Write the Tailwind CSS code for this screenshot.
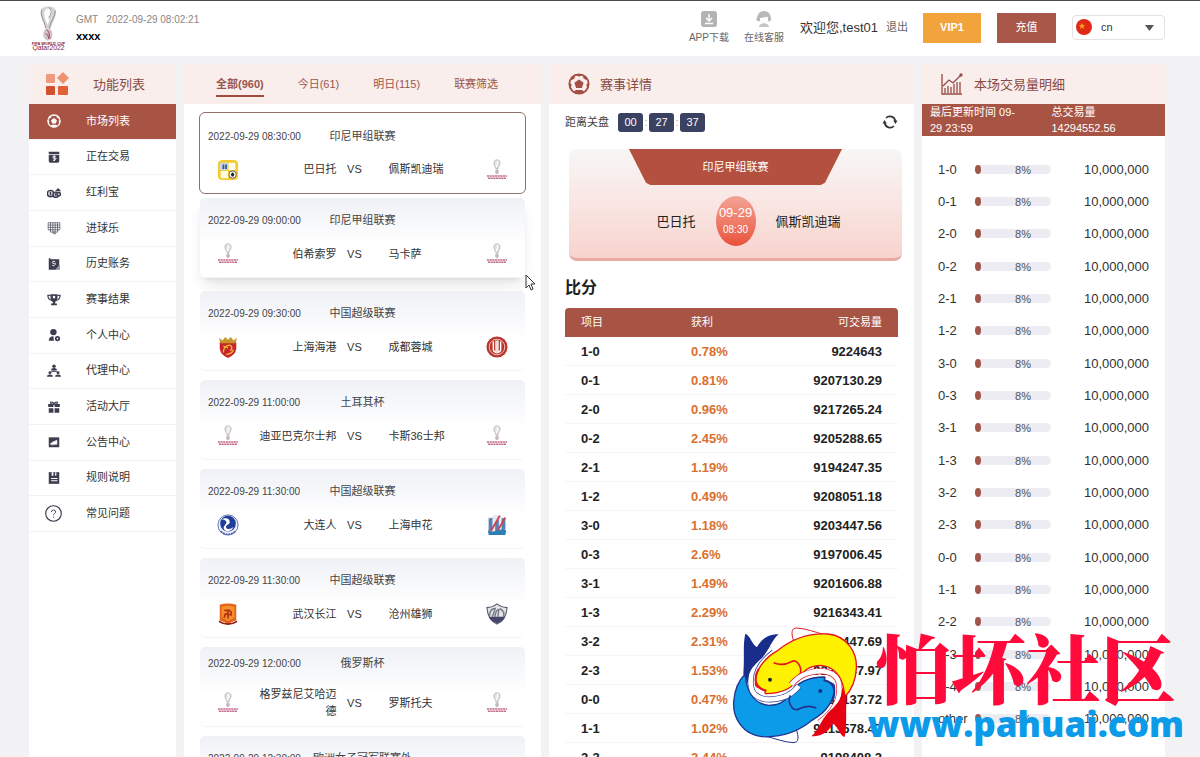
<!DOCTYPE html>
<html lang="zh-CN">
<head>
    <meta charset="UTF-8">
    <meta name="viewport" content="width=device-width, initial-scale=1.0">
    <title>市场列表</title>
    <script src="https://cdn.jsdelivr.net/npm/@tailwindcss/browser@4"></script>
</head>
<body class="relative flex flex-col h-screen overflow-hidden bg-[#f2f2f5] text-[#333] text-[11px] leading-[17px] font-['Liberation_Sans','Noto_Sans_CJK_SC',sans-serif]">

    <!-- shared symbols -->
    <svg class="hidden">
        <symbol id="worldcup" viewBox="0 0 40 46">
            <path d="M13 12C11 3 14 1 20 1s9 3 7 10c-1 5-4 8-5 13h-5c0-5-3-7-4-12z" fill="#d4d2d5"/>
            <path d="M16 11c-1-6 1-8 4-8 4 0 5 4 2 8-2 3-1 6-3 9-1-4-3-5-3-9z" fill="#fff"/>
            <path d="M13 4c-2 7 3 11 4 19M27 5c0 8-5 10-6 18M20 2c5 3 2 8 0 11" fill="none" stroke="#8f8d92" stroke-width="1"/>
            <path d="M17 24c-4 4-3 10 2 12 6-1 6-9 3-12z" fill="#cfc5cb"/>
            <path d="M18 25c4 2 2 6 4 9M17 29c2 0 3 2 3 5" fill="none" stroke="#a2375c" stroke-width="1"/>
            <text x="20" y="40" text-anchor="middle" font-size="4" font-weight="700" fill="#8a1538">FIFA WORLD CUP</text>
            <text x="20" y="46" text-anchor="middle" font-size="7" fill="#8a1538">Qatar2022</text>
        </symbol>
        <symbol id="cup-small" viewBox="0 0 24 24">
            <path d="M9 6c-1-4 1-5 3-5s4 1 3 5c-1 2-2 3-2 5h-2c0-2-2-3-2-5z" fill="#e4e2e4" stroke="#a9a6aa" stroke-width=".8"/>
            <path d="M12 2c2 2 0 4-1 7" stroke="#fff" stroke-width="1.2" fill="none"/>
            <ellipse cx="12" cy="14" rx="2" ry="2.6" fill="#c7b6bf"/>
            <path d="M1 18.500h22M2 21h20" stroke="#c56c8e" stroke-width="1.800" stroke-dasharray="2.400 .5"/>
        </symbol>
        <symbol id="barito" viewBox="0 0 24 24">
            <path d="M6 1h12q5 0 5 5v12q0 5-5 5H6q-5 0-5-5V6q0-5 5-5z" fill="#f4cb2e"/>
            <path d="M5 4h7v8H3V6q0-2 2-2z" fill="#c8d4ea"/><path d="M12.500 4H20v8h-7.500zM4 13h8v8H6q-2 0-2-2z" fill="#fffbe6"/>
            <path d="M6 6h2v5H6zM9 6h2v5H9z" fill="#3a5690"/>
            <circle cx="17" cy="17" r="4" fill="#fff" stroke="#555" stroke-width="1"/><path d="M17 14.500l2 2-1 2.500h-2l-1-2.500z" fill="#222"/>
        </symbol>
        <symbol id="port" viewBox="0 0 24 24">
            <path d="M3 7q9-4 18 0v7q-1 7-9 10-8-3-9-10z" fill="#c6252b"/>
            <path d="M2 2l4 3 3-4 3 3 3-3 3 4 4-3-2 6H4z" fill="#c8952b"/>
            <path d="M7 18c0-5 2-7 6-8 4 0 4 5 1 6M10 20c4 0 7-2 8-5M7 11l5 2" fill="none" stroke="#f2b13a" stroke-width="1.500"/>
        </symbol>
        <symbol id="chengdu" viewBox="0 0 24 24">
            <circle cx="12" cy="12" r="11.500" fill="#b8352c"/><circle cx="12" cy="12" r="8.500" fill="none" stroke="#f3c9c2" stroke-width="1"/>
            <path d="M8 6v9q0 2 3 3V5M13 5v13q3-1 3-3V6" fill="none" stroke="#fff" stroke-width="1.600"/>
        </symbol>
        <symbol id="dalian" viewBox="0 0 24 24">
            <circle cx="12" cy="12" r="11" fill="#eef1fa" stroke="#5969ae" stroke-width="1"/>
            <circle cx="12" cy="10.500" r="8.500" fill="#1f3d99"/>
            <path d="M5 6c5-3 9-1 9 3-1 3-5 3-4 6 1 2 5 2 8-1-1 4-6 6-9 4-4-3 0-6 1-8s-1-4-5-4z" fill="#fff"/>
            <path d="M4 19q8 6 16 0" fill="none" stroke="#3b4fa3" stroke-width="1.500" stroke-dasharray="2 1"/>
        </symbol>
        <symbol id="shenhua" viewBox="0 0 24 24">
            <path d="M2 3l4 1 3-3h7l2 3 4-1v14l-1 5H3l-1-4z" fill="#e7eaf3"/>
            <path d="M3 5l4-1v13l-4 2zM10 10l4-4v12l-4 2zM17 5l4-1v13l-4 2z" fill="#5580b5"/>
            <path d="M5 19L15 2M12 19l9-15" stroke="#d04353" stroke-width="2"/><path d="M2 18q5 2 10 0t10 0l-1 5H3z" fill="#2a7fb5"/>
        </symbol>
        <symbol id="wuhan" viewBox="0 0 24 24">
            <path d="M3 2q9-3 18 0v17q-5 1-9 5-4-4-9-5z" fill="#e3631c"/>
            <path d="M5 4q7-2 14 0v12q-4 1-7 4-3-3-7-4z" fill="#f4902b"/>
            <path d="M8 8h5q4 2 2 6M8 16c0-5 3-5 6-3M12 8v9" fill="none" stroke="#b42b12" stroke-width="1.800"/><path d="M2 19q10 6 20 0v2q-5 3-10 3T2 21z" fill="#8f1d16"/>
        </symbol>
        <symbol id="cangzhou" viewBox="0 0 24 24">
            <path d="M1 5q6 0 11-4 5 4 11 4-1 14-11 18Q2 19 1 5z" fill="#e3e5e9" stroke="#555a69" stroke-width="1.200"/>
            <path d="M4 14c0-6 3-8 6-8L7 15M10 15c0-5 2-8 4-8l-1 8M15 6q6 3 4 9" fill="none" stroke="#777c88" stroke-width="1.600"/><path d="M3 15h18q-2 5-9 7-7-2-9-7z" fill="#46436f"/>
        </symbol>
        <symbol id="ball" viewBox="0 0 24 24">
            <circle cx="12" cy="12" r="10.500" fill="none" stroke="currentColor" stroke-width="2"/>
            <path d="M12 7l5 3.600-1.900 5.800H8.900L7 10.600zM7.500 1.500L12 4l4.500-2.500zM1 10l3 2.500L3 17H2zM23 10l-3 2.500 1 4.500h1zM6 21l2.500-2.500h7L18 21l-6 2zM3 5l4-3 .5 3.500L4 8zM21 5l-4-3-.5 3.500L20 8z" fill="currentColor"/>
        </symbol>
    </svg>

    <header class="flex items-center shrink-0 h-14 pl-[29px] pr-[35px] pb-0.5 bg-white border-t border-[#4a4a4a]">
        <svg class="w-[39px] h-[46px]" aria-label="FIFA World Cup Qatar 2022"><use href="#worldcup"/></svg>
        <div class="ml-2 leading-4">
            <p class="text-[10px] text-[#888]">GMT &nbsp; 2022-09-29 08:02:21</p>
            <p class="font-bold text-black">xxxx</p>
        </div>
        <nav class="flex items-center ml-auto gap-[15px] text-[10px] leading-[14px] text-[#666]">
            <a href="#" class="flex flex-col items-center gap-1">
                <svg class="size-4" viewBox="0 0 16 16"><rect width="16" height="16" rx="3" fill="#b3b3b3"/><path d="M8 3v6M5 7l3 3 3-3M4 12.500h8" stroke="#fff" stroke-width="1.400" fill="none"/></svg>
                APP下载
            </a>
            <a href="#" class="flex flex-col items-center gap-1">
                <svg class="size-4" viewBox="0 0 16 16"><path d="M1 7Q2 0 8 0t7 7v2q-1 2-3 1L12 6 4 7v3Q1 11 0 8z" fill="#b9b9b9"/><path d="M4 8q4 0 6-2.500 0 2 2 2.500-.5 4-4 4T4 8z" fill="#fff"/><path d="M3 16q0-3 5-4 5 1 5 4z" fill="#c6c6c6"/></svg>
                在线客服
            </a>
        </nav>
        <p class="ml-4 text-[13px]">欢迎您,test01</p>
        <a href="#" class="ml-2 text-[#666]">退出</a>
        <button type="button" class="ml-[15px] w-[58px] h-[30px] bg-[#f3a33b] text-white font-bold">VIP1</button>
        <button type="button" class="ml-4 w-[59px] h-[30px] bg-[#a85748] text-white">充值</button>
        <div class="relative ml-4">
            <select aria-label="语言" class="appearance-none block w-[93px] h-[25px] pl-7 bg-white border border-[#e2e2e2] rounded-sm text-[11px]">
                <option>cn</option>
                <option>en</option>
            </select>
            <svg class="absolute left-1 top-1 size-4 pointer-events-none" viewBox="0 0 16 16"><circle cx="8" cy="8" r="8" fill="#e02a17"/><path d="M6 4l1 2h2L7.500 7.500 8 10 6 8.500 4 10l.5-2.500L3 6h2z" fill="#f7a11c"/></svg>
            <svg class="absolute right-[11px] top-[10px] w-[9px] h-1.5 pointer-events-none" viewBox="0 0 9 6"><path d="M0 0h9L4.500 6z" fill="#555"/></svg>
        </div>
    </header>

    <main class="grid grid-cols-[147fr_357fr_365fr_243fr] gap-x-2 flex-1 min-h-0 pt-2 pl-[29px] pr-[35px]">

        <section class="bg-white overflow-hidden">
            <h2 class="flex items-center h-10 pl-4 gap-6 bg-[#f9eeec] text-[13px] text-[#8a4a43]">
                <svg class="size-6" viewBox="0 0 24 24"><rect x="1" y="2" width="9" height="9" rx="1" fill="#ee9a7d"/><path d="M18 0l6 6-6 6-6-6z" fill="#ee9270"/><rect x="1" y="14" width="9" height="9" rx="1" fill="#d3512f"/><rect x="13" y="14" width="10" height="9" rx="1" fill="#e0603a"/></svg>
                功能列表
            </h2>
            <ul id="menu" class="grid auto-rows-fr h-[428px]"></ul>
        </section>

        <section class="bg-white overflow-hidden">
            <nav class="flex items-center h-10 pl-8 gap-[34px] bg-[#f9eeec] text-[#98564d]">
                <a href="#" class="pt-1 pb-0.5 font-bold border-b-2 border-[#a34b3e]">全部(960)</a>
                <a href="#">今日(61)</a>
                <a href="#">明日(115)</a>
                <a href="#">联赛筛选</a>
            </nav>
            <div id="matches" class="flex flex-col gap-[9px] px-4 pt-[9px]"></div>
        </section>

        <section class="bg-white overflow-hidden">
            <h2 class="flex items-center h-10 pl-[19px] gap-[10px] bg-[#f9eeec] text-[13px] text-[#8a4a43]">
                <svg class="size-[22px] text-[#a34f45]"><use href="#ball"/></svg>
                赛事详情
            </h2>
            <div class="px-4">
                <div class="flex items-center h-9 text-[#444]">
                    距离关盘
                    <div class="flex items-center ml-[9px] *:odd:w-[25px] *:odd:h-[19px] *:odd:rounded-[3px] *:odd:bg-[#3b4160] *:odd:text-white *:odd:text-center *:odd:leading-[19px] *:even:w-1.5 *:even:text-center *:even:text-[#aaa]">
                        <span>00</span><span>:</span><span>27</span><span>:</span><span>37</span>
                    </div>
                    <button type="button" aria-label="刷新" class="ml-auto">
                        <svg class="size-4" viewBox="0 0 16 16" fill="none" stroke="#333" stroke-width="1.700"><path d="M4 4A5.500 5.500 0 0113.300 7M12 12A5.500 5.500 0 012.700 9"/><path d="M15.500 6.500h-4.300L13.500 10zM.5 9.500h4.300L2.500 6z" fill="#333" stroke="none"/></svg>
                    </button>
                </div>
                <div class="ml-1 -mr-1 mt-[9px] pb-3 rounded-lg bg-linear-to-b from-[#f7f6f6] via-[#f9e6e3] to-[#f8d3ce] border-b-3 border-[#e6aaa2]">
                    <p class="w-[64%] h-9 mx-auto bg-[#b4503f] text-white text-center leading-9 [clip-path:polygon(0_0,100%_0,92%_94%,90%_100%,10%_100%,8%_94%)]">印尼甲组联赛</p>
                    <div class="grid grid-cols-[1fr_40px_1fr] items-center gap-5 mt-[11px] text-[13px] text-[#222]">
                        <span class="text-right">巴日托</span>
                        <p class="flex flex-col items-center justify-center h-[50px] rounded-[50%] bg-linear-to-b from-[#f2a396] to-[#e8503a] text-white">09-29<span class="text-[10px]">08:30</span></p>
                        <span>佩斯凯迪瑞</span>
                    </div>
                </div>
                <h3 class="mt-4 mb-[9px] text-base leading-[22px] font-bold text-[#222]">比分</h3>
                <table class="w-full table-fixed border-separate border-spacing-0">
                    <thead>
                        <tr class="h-[29px] text-white text-left *:bg-[#a85445] *:font-normal *:first:rounded-tl-sm *:last:rounded-tr-sm">
                            <th class="pl-4">项目</th>
                            <th class="pl-[15px]">获利</th>
                            <th class="pr-4 text-right">可交易量</th>
                        </tr>
                    </thead>
                    <tbody id="scores" class="text-[13px] font-bold text-[#222]"></tbody>
                </table>
            </div>
        </section>

        <section class="bg-white overflow-hidden">
            <h2 class="flex items-center h-10 pl-[19px] gap-[11px] bg-[#f9eeec] text-[13px] text-[#8a4a43]">
                <svg class="size-[22px]" viewBox="0 0 22 22" fill="none" stroke="#954a44" stroke-width="1.300"><path d="M1 1v20h20M4 20v-5M7 20v-7M10 20v-6M13 20v-9M16 20v-11M19 20V9M2 13l6-6 4 3 8-8"/><circle cx="20" cy="2" r="1"/></svg>
                本场交易量明细
            </h2>
            <div class="grid grid-cols-2 pl-2 bg-[#a85445] text-white leading-4">
                <p class="w-24">最后更新时间 09-<wbr>29 23:59</p>
                <p class="pl-1">总交易量<br>14294552.56</p>
            </div>
            <ul id="volumes" class="grid auto-rows-fr h-[582px] mt-[17px] px-4 text-[13px]"></ul>
        </section>
    </main>

    <!-- watermark -->
    <div class="absolute right-4 bottom-[7px] flex items-center pointer-events-none">
        <svg class="w-[140px] h-[128px]" viewBox="0 0 420 384">
            <defs>
                <path id="fin" d="M197 58C190 35 188 18 207 18C235 20 260 30 290 38z"/>
                <path id="tail" d="M342 195C345 235 318 255 300 272C275 300 272 325 250 343C275 343 298 335 315 305C330 312 335 340 350 345C358 310 352 280 356 225z"/>
                <path id="body" d="M83 190C78 150 105 110 150 85C195 48 250 33 300 36C360 42 388 95 385 140C383 175 370 205 350 225C348 180 330 135 280 130C240 130 225 150 215 165C195 200 160 215 112 215C108 210 116 208 112 204C100 200 88 198 83 190z"/>
                <path id="gill" d="M137 122C155 130 175 127 190 119C208 108 225 140 215 160"/>
                <path id="band" d="M128 78C85 110 62 150 69 195C76 232 120 240 165 226C185 219 200 208 212 192"/>
                <path id="lip" d="M92 140C75 170 82 200 115 206"/>
            </defs>
            <g transform="rotate(180 201 190)">
                <use href="#fin" fill="#fff" stroke="#22338f" stroke-width="3"/>
                <use href="#body" fill="#0b9be8" stroke="#22338f" stroke-width="4"/>
            </g>
            <use href="#fin" fill="#fff" stroke="#dd1f2d" stroke-width="3"/>
            <use href="#body" fill="#fff200" stroke="#e4151f" stroke-width="4"/>
            <g fill="none">
                <use href="#band" stroke="#22338f" stroke-width="18"/><use href="#band" stroke="#fff" stroke-width="14"/>
                <use href="#gill" stroke="#e4151f" stroke-width="5"/><use href="#lip" stroke="#e4151f" stroke-width="6"/>
                <g transform="rotate(180 201 190)">
                    <use href="#band" stroke="#dd1f2d" stroke-width="18"/><use href="#band" stroke="#fff" stroke-width="14"/>
                    <use href="#gill" stroke="#22338f" stroke-width="5"/><use href="#lip" stroke="#22338f" stroke-width="6"/>
                </g>
            </g>
            <use href="#tail" fill="#e60012"/>
            <use href="#tail" transform="rotate(180 201 190)" fill="#1b2d8a"/>
            <circle cx="126" cy="173" r="6" fill="#1b2350"/><circle cx="277" cy="207" r="6" fill="#1b2d8a"/>
        </svg>
        <div class="text-center">
            <p class="text-[75px] leading-[76px] font-black text-[#ff0a3a] font-['Noto_Serif_CJK_SC','Noto_Sans_CJK_SC',serif]">怕坏社区</p>
            <p class="text-[35px] leading-10 font-extrabold text-[#0b9be8] font-['Open_Sans','Noto_Sans',sans-serif]">www.pahuai.com</p>
        </div>
    </div>

<script>
    const menu = [
        ['市场列表', '<use href="#ball"/>'],
        ['正在交易', '<path d="M3 3h18v4H3zM3 8h18v11q0 3-3 3H6q-3 0-3-3z" fill="currentColor"/><path d="M15 11q-5-2-5 1t4 2-1 4q-2 0-3-1M12.500 9v10" stroke="#fff" stroke-width="1.500" fill="none"/>'],
        ['红利宝', '<g fill="#c9cad3" stroke="currentColor" stroke-width="2.500"><circle cx="6" cy="13" r="5.500"/><circle cx="15" cy="15" r="4.500"/><circle cx="20" cy="14" r="3"/></g><path d="M6 10v6M15 12v5M19 5l-3 3h6z" stroke="currentColor" stroke-width="2"/>'],
        ['进球乐', '<path d="M2 3h20v12l-3 1M2 3v12l3 1M6 3v16M10 3v18M14 3v18M18 3v16M2 7h20M2 11h20M4 15h16M6 19h12" fill="none" stroke="currentColor" stroke-width="1.500" opacity=".75"/><circle cx="13" cy="20" r="3" fill="#8c8d9a"/>'],
        ['历史账务', '<path d="M3 2h3v2h15v10l-6 8H3z" fill="currentColor"/><path d="M14 8q-5-2-5 1t4 2-1 4q-2 0-3-1" stroke="#fff" stroke-width="1.500" fill="none"/><path d="M14 22l8-9v9z" fill="#8c8d9a"/>'],
        ['赛事结果', '<path d="M6 2h12v7q0 5-4 6v3h3v3H7v-3h3v-3q-4-1-4-6z" fill="currentColor"/><path d="M6 4H1.500q0 7 5 8M18 4h4.500q0 7-5 8" fill="none" stroke="currentColor" stroke-width="2"/><path d="M10 5h4v4h-4z" fill="#fff"/>'],
        ['个人中心', '<circle cx="11" cy="7" r="5.500" fill="currentColor"/><path d="M3 22q0-8 8-8l1 8z" fill="currentColor"/><circle cx="18" cy="18" r="3" fill="none" stroke="currentColor" stroke-width="3"/>'],
        ['代理中心', '<g fill="currentColor"><circle cx="12" cy="4" r="3"/><path d="M7 11q0-4 5-4t5 4z"/><circle cx="5" cy="15" r="2.500"/><path d="M0 22q0-4 5-4t5 4z"/><circle cx="19" cy="15" r="2.500"/><path d="M14 22q0-4 5-4t5 4z"/></g><path d="M12 11v3M6 14l6-2 6 2" stroke="currentColor" stroke-width="1.500" fill="none"/>'],
        ['活动大厅', '<path d="M2 7h9v5H2zM13 7h9v5h-9zM3 14h8v8H3zM13 14h8v8h-8z" fill="currentColor"/><path d="M12 7Q6 8 6 4q4-2 6 3 2-5 6-3 0 4-6 3" fill="none" stroke="currentColor" stroke-width="2"/>'],
        ['公告中心', '<path d="M3 4h18v17H3z" fill="currentColor"/><path d="M6 15l4-3 7-3v7H6zM8 17h3" fill="#fff" stroke="#fff"/>'],
        ['规则说明', '<path d="M3 2h18v20H3z" fill="currentColor"/><path d="M8 2h3v6H8zM14 2h2v6h-2zM7 12h11v1.500H7zM7 16h11v1.500H7z" fill="#fff"/>'],
        ['常见问题', '<circle cx="12" cy="12" r="11" fill="none" stroke="currentColor" stroke-width="1.600"/><path d="M9 10q0-3 3-3t3 3q0 1-1.500 2T12 14.500M12 16.500v1.500" fill="none" stroke="currentColor" stroke-width="1.300"/>'],
    ];

    const matches = [
        ['2022-09-29 08:30:00', '印尼甲组联赛', '巴日托', '佩斯凯迪瑞', 'barito', 'cup-small'],
        ['2022-09-29 09:00:00', '印尼甲组联赛', '伯希索罗', '马卡萨', 'cup-small', 'cup-small'],
        ['2022-09-29 09:30:00', '中国超级联赛', '上海海港', '成都蓉城', 'port', 'chengdu'],
        ['2022-09-29 11:00:00', '土耳其杯', '迪亚巴克尔士邦', '卡斯36士邦', 'cup-small', 'cup-small'],
        ['2022-09-29 11:30:00', '中国超级联赛', '大连人', '上海申花', 'dalian', 'shenhua'],
        ['2022-09-29 11:30:00', '中国超级联赛', '武汉长江', '沧州雄狮', 'wuhan', 'cangzhou'],
        ['2022-09-29 12:00:00', '俄罗斯杯', '格罗兹尼艾哈迈德', '罗斯托夫', 'cup-small', 'cup-small'],
        ['2022-09-29 12:30:00', '欧洲女子冠军联赛外', '', '', 'cup-small', 'cup-small'],
    ];

    const scores = [
        ['1-0', '0.78%', '9224643'], ['0-1', '0.81%', '9207130.29'], ['2-0', '0.96%', '9217265.24'],
        ['0-2', '2.45%', '9205288.65'], ['2-1', '1.19%', '9194247.35'], ['1-2', '0.49%', '9208051.18'],
        ['3-0', '1.18%', '9203447.56'], ['0-3', '2.6%', '9197006.45'], ['3-1', '1.49%', '9201606.88'],
        ['1-3', '2.29%', '9216343.41'], ['3-2', '2.31%', '9220447.69'], ['2-3', '1.53%', '9222247.97'],
        ['0-0', '0.47%', '9184137.72'], ['1-1', '1.02%', '9213578.47'], ['2-2', '2.44%', '9198408.2'],
    ];

    const volumes = ['1-0', '0-1', '2-0', '0-2', '2-1', '1-2', '3-0', '0-3', '3-1', '1-3', '3-2', '2-3', '0-0', '1-1', '2-2', '3-3', '4-4', 'other']
        .map(label => ({ label, percent: 8, amount: '10,000,000' }));

    document.getElementById('menu').innerHTML = menu.map(([name, icon], i) => `
        <li class="border-b border-[#f2f2f4]">
            <a href="#" class="flex items-center h-full pl-4 gap-6 ${i === 0 ? 'bg-[#a85445] text-white' : 'text-[#3c3e50]'}">
                <span class="flex justify-center w-[17px]"><svg class="${i === 11 ? 'size-[17px]' : 'size-[14px]'} shrink-0" viewBox="0 0 24 24">${icon}</svg></span>
                <span class="${i === 0 ? 'text-white' : 'text-[#333]'}">${name}</span>
            </a>
        </li>`).join('');

    const pointer = '<svg class="absolute left-full top-[76px] w-[11px] h-[18px]" viewBox="0 0 11 18"><path d="M1 1v13l3-3 2 5 2-1-2-5h4z" fill="#fff" stroke="#333" stroke-width="1"/></svg>';

    document.getElementById('matches').innerHTML = matches.map(([date, league, home, away, homeLogo, awayLogo], i) => `
        <article class="relative flex flex-col justify-center gap-[14px] shrink-0 h-20 pt-0.5 rounded-[5px] ${i === 0 ? 'bg-white outline outline-[#8f706c]' : 'bg-linear-to-b from-[#eff1f6] to-white to-60% border-b border-[#f4f4f6]'} ${i === 1 ? '-translate-y-1 shadow-lg' : ''}">
            <div class="grid grid-cols-[1fr_auto_1fr] items-center px-2 text-[#444]">
                <time class="text-[10px] whitespace-nowrap">${date}</time>
                <span>${league}</span>
            </div>
            <div class="grid grid-cols-[24px_96fr_36px_112fr_24px] items-center px-4">
                <svg class="size-[22px] mx-auto"><use href="#${homeLogo}"/></svg>
                <span class="w-20 ml-auto text-right">${home}</span>
                <span class="text-center">VS</span>
                <span class="pl-4">${away}</span>
                <svg class="size-[22px] mx-auto"><use href="#${awayLogo}"/></svg>
            </div>
            ${i === 1 ? pointer : ''}
        </article>`).join('');

    document.getElementById('scores').innerHTML = scores.map(([score, profit, amount]) => `
        <tr class="h-[29px] *:border-b *:border-[#f5f5f5]">
            <td class="pl-4">${score}</td>
            <td class="pl-[15px] text-[#d9702f]">${profit}</td>
            <td class="pr-4 text-right">${amount}</td>
        </tr>`).join('');

    document.getElementById('volumes').innerHTML = volumes.map(v => `
        <li class="grid grid-cols-[37px_76px_1fr] items-center">
            <span>${v.label}</span>
            <div class="relative h-[9px] rounded-full bg-[#ececf2]">
                <div class="h-full rounded-[50%] bg-[#a05549]" style="width: ${v.percent}%"></div>
                <span class="absolute inset-y-0 right-5 text-[11px] leading-[10px] text-[#555]">${v.percent}%</span>
            </div>
            <span class="text-right">${v.amount}</span>
        </li>`).join('');
</script>
</body>
</html>
